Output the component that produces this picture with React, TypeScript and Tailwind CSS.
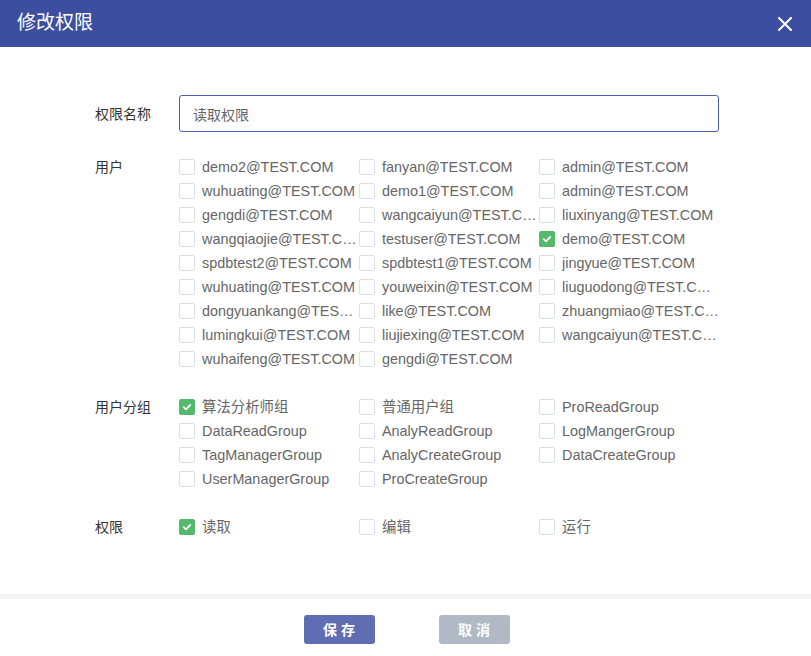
import { useState } from 'react';

const users = [
  'demo2@TEST.COM', 'fanyan@TEST.COM', 'admin@TEST.COM',
  'wuhuating@TEST.COM', 'demo1@TEST.COM', 'admin@TEST.COM',
  'gengdi@TEST.COM', 'wangcaiyun@TEST.COM', 'liuxinyang@TEST.COM',
  'wangqiaojie@TEST.COM', 'testuser@TEST.COM', 'demo@TEST.COM',
  'spdbtest2@TEST.COM', 'spdbtest1@TEST.COM', 'jingyue@TEST.COM',
  'wuhuating@TEST.COM', 'youweixin@TEST.COM', 'liuguodong@TEST.COM',
  'dongyuankang@TEST.COM', 'like@TEST.COM', 'zhuangmiao@TEST.COM',
  'lumingkui@TEST.COM', 'liujiexing@TEST.COM', 'wangcaiyun@TEST.COM',
  'wuhaifeng@TEST.COM', 'gengdi@TEST.COM',
];

const groups = [
  '算法分析师组', '普通用户组', 'ProReadGroup',
  'DataReadGroup', 'AnalyReadGroup', 'LogMangerGroup',
  'TagManagerGroup', 'AnalyCreateGroup', 'DataCreateGroup',
  'UserManagerGroup', 'ProCreateGroup',
];

const perms = ['读取', '编辑', '运行'];

// ─── Checkbox item ────────────────────────────────────────────────────────────
function CheckItem({
  label,
  checked,
  onToggle,
}: {
  label: string;
  checked: boolean;
  onToggle: () => void;
}) {
  return (
    <label className="flex items-center h-6 w-[180px] cursor-pointer" onClick={onToggle}>
      <span
        className={`w-4 h-4 shrink-0 rounded-[2px] border flex items-center justify-center ${
          checked ? 'bg-[#55b96b] border-[#55b96b]' : 'bg-white border-[#dcdfe6]'
        }`}
      >
        {checked && (
          <svg width="10" height="10" viewBox="0 0 10 10" fill="none">
            <path d="M1.8 5.2 4 7.3 8.3 2.8" stroke="white" strokeWidth="1.8" strokeLinecap="round" strokeLinejoin="round" />
          </svg>
        )}
      </span>
      <span className="ml-[7px] w-[157px] truncate text-[14.4px] text-[#666] leading-6">{label}</span>
    </label>
  );
}

// ─── Checkbox grid ────────────────────────────────────────────────────────────
function CheckGrid({ items, initial }: { items: string[]; initial: number[] }) {
  const [sel, setSel] = useState<number[]>(initial);
  const toggle = (i: number) =>
    setSel((s) => (s.includes(i) ? s.filter((x) => x !== i) : [...s, i]));

  return (
    <div className="grid grid-cols-[180px_180px_180px]">
      {items.map((item, i) => (
        <CheckItem key={i} label={item} checked={sel.includes(i)} onToggle={() => toggle(i)} />
      ))}
    </div>
  );
}

function Row({ label, children, className = '' }: { label: string; children: React.ReactNode; className?: string }) {
  return (
    <div className={`flex ${className}`}>
      <div className="w-[84px] shrink-0 text-sm text-[#333] leading-6">{label}</div>
      <div>{children}</div>
    </div>
  );
}

export default function App() {
  const [name, setName] = useState('读取权限');

  return (
    <div
      className="w-[811px] h-[656px] bg-white flex flex-col"
      style={{ fontFamily: '"Liberation Sans", "Noto Sans CJK SC", sans-serif' }}
    >
      {/* Header */}
      <div className="h-[47px] shrink-0 bg-[#3c4ea0] flex items-center justify-between pl-[17px] pr-[19px]">
        <h1 className="text-[19px] text-white">修改权限</h1>
        <button className="text-white">
          <svg width="14" height="14" viewBox="0 0 14 14">
            <path d="M1 1 13 13M13 1 1 13" stroke="white" strokeWidth="2" strokeLinecap="square" />
          </svg>
        </button>
      </div>

      {/* Body */}
      <div className="flex-1 pl-[95px] pt-[48px]">
        <div className="flex items-center">
          <div className="w-[84px] shrink-0 text-sm text-[#333]">权限名称</div>
          <input
            value={name}
            onChange={(e) => setName(e.target.value)}
            className="w-[540px] h-[37px] rounded-[3px] border border-[#4a5ec0] px-[13px] text-sm text-[#666] outline-none"
          />
        </div>

        <Row label="用户" className="mt-[23px]">
          <CheckGrid items={users} initial={[11]} />
        </Row>

        <Row label="用户分组" className="mt-6">
          <CheckGrid items={groups} initial={[0]} />
        </Row>

        <Row label="权限" className="mt-6">
          <CheckGrid items={perms} initial={[0]} />
        </Row>
      </div>

      {/* Footer */}
      <div className="h-[62px] shrink-0 border-t-[5px] border-[#f4f4f4] flex items-start justify-center gap-16 pt-[16px] pl-[2px]">
        <button className="w-[71px] h-[29px] rounded-[3px] bg-[#5f6db2] text-white text-sm font-bold tracking-[4px] pl-1">
          保存
        </button>
        <button className="w-[71px] h-[29px] rounded-[3px] bg-[#b1bac4] text-white text-sm font-bold tracking-[4px] pl-1">
          取消
        </button>
      </div>
    </div>
  );
}
